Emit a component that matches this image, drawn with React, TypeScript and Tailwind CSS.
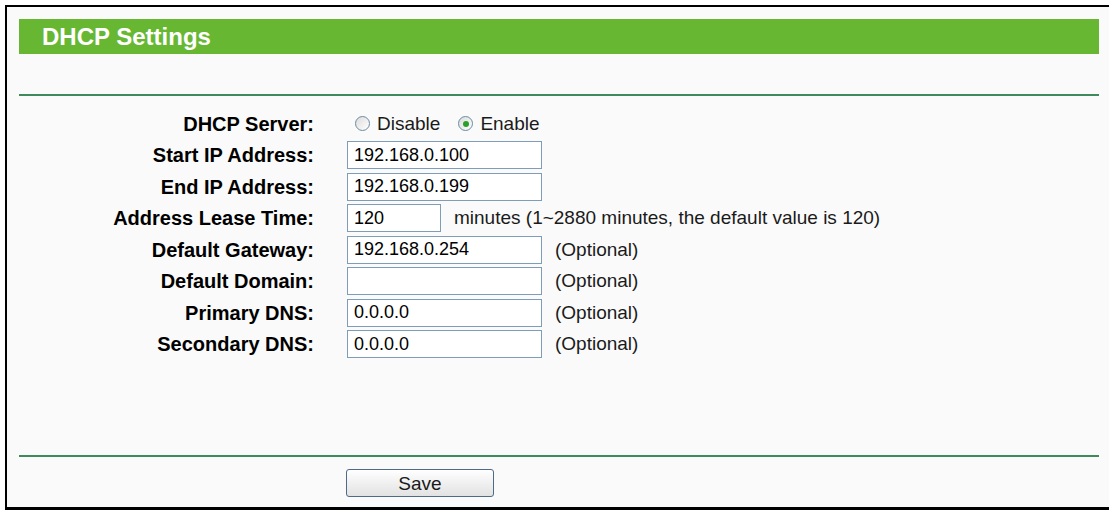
import React from 'react'

const font = { fontFamily: '"Liberation Sans", Arial, sans-serif' }

type Row = {
  label: string
  value?: string
  short?: boolean
  note?: string
}

const rows: Row[] = [
  { label: 'Start IP Address:', value: '192.168.0.100' },
  { label: 'End IP Address:', value: '192.168.0.199' },
  { label: 'Address Lease Time:', value: '120', short: true, note: 'minutes (1~2880 minutes, the default value is 120)' },
  { label: 'Default Gateway:', value: '192.168.0.254', note: '(Optional)' },
  { label: 'Default Domain:', value: '', note: '(Optional)' },
  { label: 'Primary DNS:', value: '0.0.0.0', note: '(Optional)' },
  { label: 'Secondary DNS:', value: '0.0.0.0', note: '(Optional)' },
]

function Radio({ checked }: { checked?: boolean }) {
  return (
    <span className="flex h-[15px] w-[15px] items-center justify-center rounded-full border border-[#6d8aa3] bg-gradient-to-br from-[#dcdcdc] to-white">
      {checked && <span className="h-[6px] w-[6px] rounded-full bg-[#2aa02a]" />}
    </span>
  )
}

function FieldRow({ row }: { row: Row }) {
  return (
    <div className="flex h-[31.5px] items-center">
      <div className="w-[295px] text-right text-[20px] font-bold text-black">{row.label}</div>
      <div className="flex items-center pl-[33px]">
        <input
          readOnly
          value={row.value}
          className={
            (row.short ? 'w-[94px]' : 'w-[195px]') +
            ' h-[28px] border border-[#7f9db9] bg-white px-[6px] text-[18px] text-black outline-none'
          }
          style={font}
        />
        {row.note && <span className="pl-[13px] text-[19px] text-[#1a1a1a]">{row.note}</span>}
      </div>
    </div>
  )
}

export default function App() {
  return (
    <div className="flex h-[512px] w-[1109px] flex-col bg-white pl-[5px] pt-[5px]" style={font}>
      <div className="h-[2px] bg-black" />
      <div className="flex flex-1">
        <div className="w-[2px] bg-black" />
        <div className="flex-1 bg-[#fafafa] pl-[12px] pt-[12px]">
          <div className="w-[1080px]">
            <div className="flex h-[35px] items-center bg-[#68b733] pl-[23px] text-[24px] font-bold text-white">
              DHCP Settings
            </div>
            <div className="mt-[40px] h-[2px] bg-[#3e8a5d]" />

            <div className="pt-[12px]">
              <div className="flex h-[31.5px] items-center">
                <div className="w-[295px] text-right text-[20px] font-bold text-black">DHCP Server:</div>
                <div className="flex items-center pl-[41px] text-[19px] text-[#1a1a1a]">
                  <Radio />
                  <span className="pl-[7px]">Disable</span>
                  <span className="pl-[18px]">
                    <Radio checked />
                  </span>
                  <span className="pl-[7px]">Enable</span>
                </div>
              </div>
              {rows.map((r) => (
                <FieldRow key={r.label} row={r} />
              ))}
            </div>

            <div className="mt-[95px] h-[2px] bg-[#3e8a5d]" />

            <div className="pl-[327px] pt-[12px]">
              <button className="h-[28px] w-[148px] rounded-[3px] border border-[#4d6a87] bg-gradient-to-b from-white to-[#e2e2e2] text-[19px] text-[#1a1a1a]">
                Save
              </button>
            </div>
          </div>
        </div>
      </div>
      <div className="h-[3px] bg-black" />
      <div className="h-[2px]" />
    </div>
  )
}
